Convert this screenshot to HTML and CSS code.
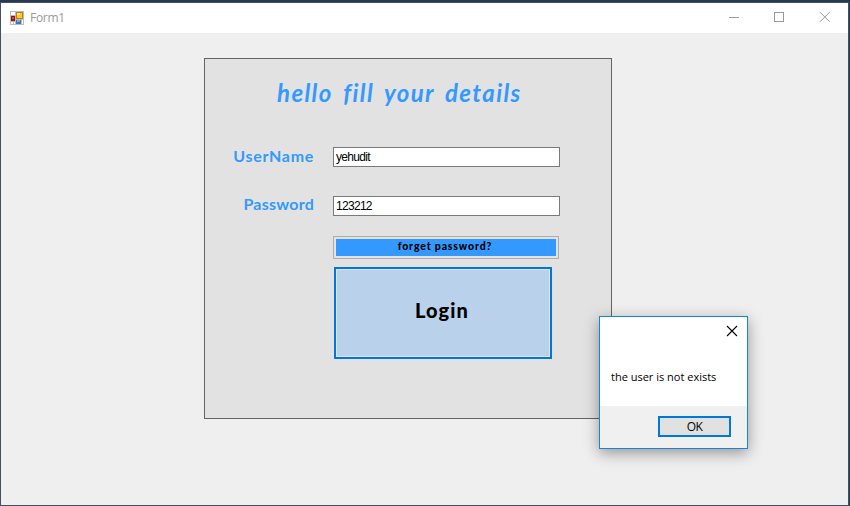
FILE: index.html
```html
<!DOCTYPE html>
<html lang="en">
<head>
<meta charset="utf-8">
<title>Form1</title>
<link rel="stylesheet" href="styles.css">
</head>
<body>
<div class="window">
  <header class="titlebar">
    <svg class="app-icon" width="14" height="14" viewBox="0 0 14 14" shape-rendering="crispEdges">
      <path fill="#bcbcbc" d="M0 0h14v14H0z"/>
      <path fill="#fff" d="M1 1h4v3H1zM1 11h2v2H1zM4 11h1v2H4zM12 9h1v4h-1z"/>
      <path fill="#b98500" d="M6 1h7v7H6z"/>
      <path fill="#ffc928" d="M7 2h5v5H7z"/>
      <path fill="#ffe695" d="M7 2h3v2H7z"/>
      <path fill="#8c1710" d="M1 5h4v5H1z"/>
      <path fill="#d9483a" d="M2 6h2v2H2z"/>
      <path fill="#3c6fd0" d="M6 9h5v4H6z"/>
      <path fill="#78a5ee" d="M7 9h3v2H7z"/>
    </svg>
    <span class="caption">Form1</span>
    <svg class="controls" width="101" height="10" viewBox="0 0 101 10" fill="none" stroke="#999">
      <path d="M0 5.500h10M45.500 .5h9v9h-9z" shape-rendering="crispEdges"/>
      <path d="M91 .2l9.600 9.600M100.600 .2L91 9.800"/>
    </svg>
  </header>
  <main class="client">
    <section class="panel">
      <h1 class="heading"><span>hello fill your details</span></h1>
      <div class="row">
        <label class="label label-user"><span>UserName</span></label>
        <div class="field"><span class="value-user">yehudit</span></div>
      </div>
      <div class="row">
        <label class="label label-pass"><span>Password</span></label>
        <div class="field"><span class="value-pass">123212</span></div>
      </div>
      <button class="forget"><span>forget password?</span></button>
      <button class="login"><span>Login</span></button>
    </section>
  </main>
</div>
<div class="dialog">
  <div class="dialog-body">
    <svg class="dialog-close" width="10" height="10" viewBox="0 0 10 10" stroke="#000" stroke-width="1.100"><path d="M0 0l10 10M10 0L0 10"/></svg>
    <p class="message">the user is not exists</p>
  </div>
  <div class="dialog-footer"><button class="ok">OK</button></div>
</div>
</body>
</html>
```
FILE: styles.css
```css
* { box-sizing: border-box; }
body { margin: 0; width: 850px; height: 506px; overflow: hidden; background: #293955; padding: 2px 1px 0 0; font-family: "Segoe UI", "Open Sans", sans-serif; }
button { padding: 0; margin: 0; border-radius: 0; color: #000; }
.window { width: 849px; height: 504px; border: 1px solid #454f65; background: #efefef; }
.titlebar { height: 30px; background: #fff; display: flex; align-items: center; padding: 0 18px 0 9px; }
.app-icon { margin-top: -1px; }
.caption { margin-left: 6px; font-size: 12px; letter-spacing: -.3px; line-height: 16px; color: #999; }
.controls { margin-left: auto; margin-top: -2px; }
.client { padding: 25px 0 0 203px; }
.panel { width: 408px; height: 361px; border: 1px solid #646464; background: #e2e2e2; }
.heading { margin: 0; padding: 17px 0 0 72px; height: 88px; font: italic 700 24px/34px "Comic Sans MS", Lato, sans-serif; color: #39f; white-space: nowrap; }
.heading span { letter-spacing: 1.400px; word-spacing: 3.800px; font-variant-ligatures: none; }
.row { display: flex; height: 20px; margin-bottom: 29px; }
.label { width: 110px; margin-right: 18px; text-align: right; font: 700 16px/18px "Comic Sans MS", Lato, sans-serif; color: #39f; }
.label-user { letter-spacing: .7px; }
.label-pass { letter-spacing: .25px; line-height: 16px; }
.label span { margin-right: 1px; }
.field { width: 227px; height: 20px; border: 1px solid #7a7a7a; background: #fff; padding-left: 2px; font: 12px/18px "Microsoft Sans Serif", "Liberation Sans", sans-serif; color: #000; }
.value-user { letter-spacing: -.7px; }
.value-pass { letter-spacing: -.7px; }
.forget { display: block; width: 226px; height: 23px; margin: -9px 0 8px 128px; border: 1px solid #adadad; outline: 0; padding: 2px; background: #39f content-box; font: 900 10.500px/17px "Berlin Sans FB", Lato, sans-serif; letter-spacing: .85px; }
.forget span { position: relative; left: -1px; top: -1px; }
.login { display: block; width: 218px; height: 92px; margin-left: 129px; border: 2px solid #0078d7; box-shadow: inset 0 0 0 1px #e2e2e2; background: #bad1eb; font: 900 20px/24px "Berlin Sans FB", Lato, sans-serif; }
.login span { position: relative; left: -1px; top: -3px; letter-spacing: 1.100px; }
.dialog { position: absolute; left: 599px; top: 316px; width: 149px; height: 133px; border: 1px solid #1883d7; background: #fff; box-shadow: 0 4px 14px rgba(0,0,0,.38); }
.dialog-body { height: 89px; padding: 9px 10px 0 11px; display: flex; flex-direction: column; }
.dialog-close { align-self: flex-end; overflow: visible; }
.message { margin: 33px 0 0; font-size: 11px; line-height: 16px; letter-spacing: 0; white-space: nowrap; color: #000; }
.dialog-footer { height: 42px; background: #f0f0f0; padding: 10px 16px 0 0; display: flex; justify-content: flex-end; }
.ok { width: 73px; height: 21px; border: 2px solid #0078d7; background: #e1e1e1; font: 12px/17px "Segoe UI", "Open Sans", sans-serif; letter-spacing: -.6px; }
```
